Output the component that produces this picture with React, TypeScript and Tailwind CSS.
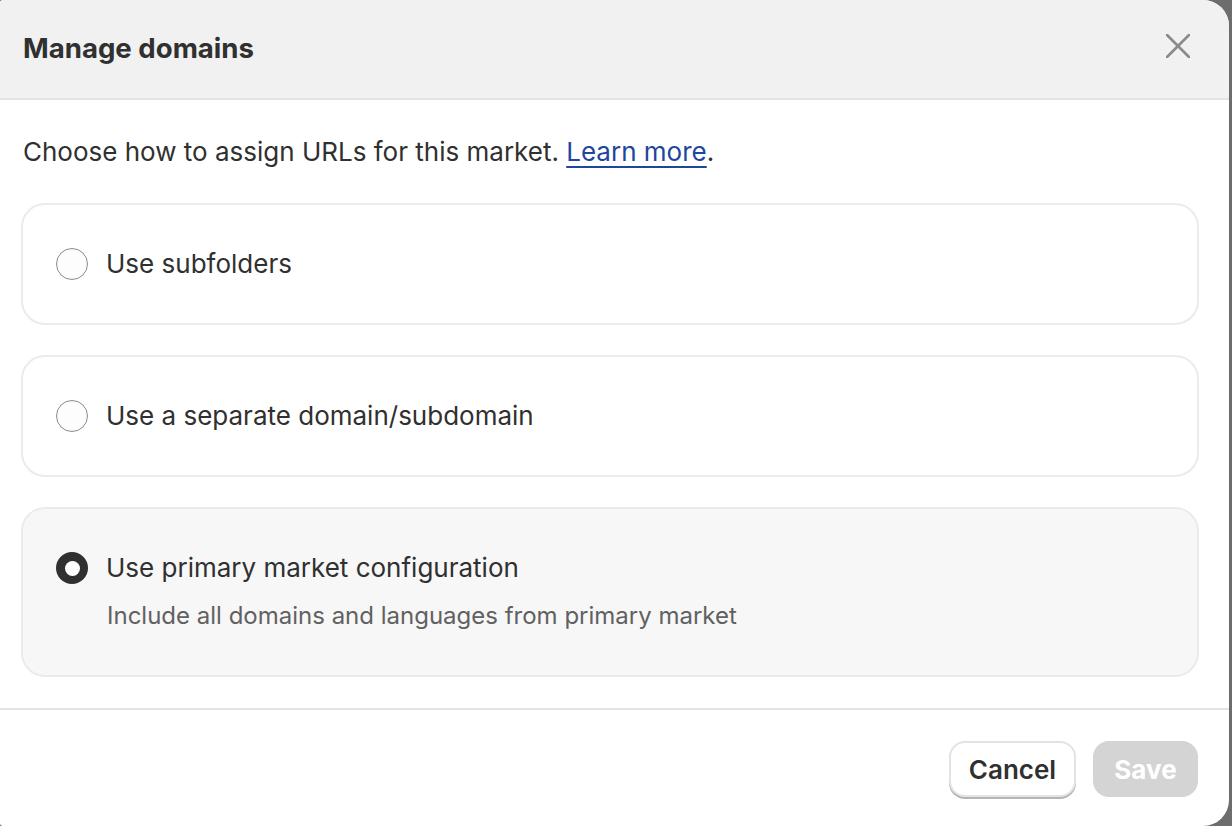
import React from "react";

function Radio({ checked }: { checked?: boolean }) {
  if (checked) {
    return (
      <div className="w-[32px] h-[32px] rounded-full bg-[#303030] flex items-center justify-center shrink-0">
        <div className="w-[15px] h-[15px] rounded-full bg-white" />
      </div>
    );
  }
  return <div className="w-[32px] h-[32px] rounded-full border-[1.5px] border-[#8a8a8a] bg-[#fdfdfd] shrink-0" />;
}

function Option({ label, desc, checked }: { label: string; desc?: string; checked?: boolean }) {
  return (
    <div
      className={
        "rounded-[24px] border-2 border-[#ebebeb] px-[33px] py-[39px] flex flex-col gap-[8px] " +
        (checked ? "bg-[#f7f7f7]" : "bg-white")
      }
    >
      <div className="flex items-center gap-[18px] h-[40px]">
        <Radio checked={checked} />
        <span className="text-[26px] leading-[40px] text-[#303030]">{label}</span>
      </div>
      {desc && <div className="pl-[51px] text-[24px] leading-[40px] text-[#616161]">{desc}</div>}
    </div>
  );
}

export default function App() {
  return (
    <div className="w-[1232px] h-[826px] bg-[#6d6d6d] overflow-hidden" style={{ fontFamily: "Inter, 'Noto Sans', sans-serif" }}>
      <div className="w-[1229px] h-[826px] bg-white rounded-tr-[26px] rounded-br-[26px] rounded-tl-[3px] rounded-bl-[3px] overflow-hidden flex flex-col">
        <div className="h-[100px] bg-[#f1f1f1] border-b-2 border-[#e3e3e3] flex items-center justify-between pl-[23px] pr-[39px] shrink-0">
          <h1 className="text-[27.6px] font-[650] text-[#303030] leading-[40px] mb-[3px]">Manage domains</h1>
          <svg width="24" height="24" viewBox="0 0 24 24" className="mb-[6px]">
            <path d="M1 1 L23 23 M23 1 L1 23" stroke="#8a8a8a" strokeWidth="2.6" strokeLinecap="round" />
          </svg>
        </div>
        <div className="px-[21px] pt-[32px] pb-[31px] flex flex-col">
          <p className="pl-[2px] text-[26px] leading-[40px] text-[#303030] mb-[31px]">
            Choose how to assign URLs for this market.{" "}
            <span className="text-[#1e45a0] underline underline-offset-[5px] decoration-[2px]">Learn more</span>.
          </p>
          <div className="w-[1178px] flex flex-col gap-[30px]">
            <Option label="Use subfolders" />
            <Option label="Use a separate domain/subdomain" />
            <Option label="Use primary market configuration" desc="Include all domains and languages from primary market" checked />
          </div>
        </div>
        <div className="border-t-2 border-[#e3e3e3] flex justify-end items-start gap-[17px] pr-[31px] pt-[31px]">
          <button className="w-[127px] h-[56px] rounded-[16px] bg-white border-2 border-[#e3e3e3] shadow-[0_2px_0_#b5b5b5] text-[26px] font-[600] text-[#303030]">
            Cancel
          </button>
          <button className="w-[105px] h-[56px] rounded-[16px] bg-[#d4d4d4] text-[26px] font-[650] text-white">Save</button>
        </div>
      </div>
    </div>
  );
}
